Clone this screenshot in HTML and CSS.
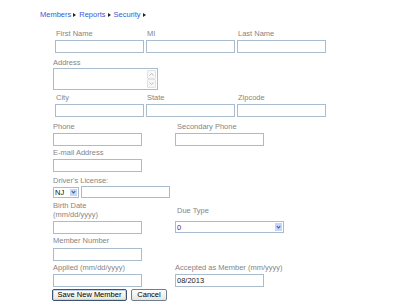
FILE: index.html
```html
<!DOCTYPE html>
<html lang="en">
<head>
    <meta charset="UTF-8" />
    <meta name="viewport" content="width=device-width, initial-scale=1" />
    <title>New Member</title>
    <link rel="stylesheet" href="styles.css">
</head>
<body>
    <div class="crumbs">
        <a href="#">Members</a><span class="sep"></span><a href="#">Reports</a><span class="sep"></span><a href="#">Security</a><span class="sep"></span>
    </div>

    <form class="member-form" onsubmit="return false;">
        <!-- Name -->
        <div class="trio block-name">
            <label>First Name</label>
            <label>MI</label>
            <label>Last Name</label>
            <input type="text" />
            <input type="text" />
            <input type="text" />
        </div>

        <div class="field block-address">
            <label>Address</label>
            <div class="textbox">
                <textarea></textarea>
                <div class="scroll">
                    <span class="scroll-btn">
                        <svg width="7" height="7" viewBox="0 0 7 7"><path d="M1.5 4.5 L3.5 2.5 L5.5 4.5" fill="none" stroke="#b9b9b9" stroke-width="1"/></svg>
                    </span>
                    <span class="scroll-btn">
                        <svg width="7" height="7" viewBox="0 0 7 7"><path d="M1.5 2.5 L3.5 4.5 L5.5 2.5" fill="none" stroke="#b9b9b9" stroke-width="1"/></svg>
                    </span>
                </div>
            </div>
        </div>

        <div class="trio block-city">
            <label>City</label>
            <label>State</label>
            <label>Zipcode</label>
            <input type="text" />
            <input type="text" />
            <input type="text" />
        </div>

        <div class="pair block-phone">
            <label>Phone</label>
            <label class="right">Secondary Phone</label>
            <input type="text" />
            <input type="text" />
        </div>

        <div class="field block-email">
            <label>E-mail Address</label>
            <input type="text" />
        </div>

        <div class="field block-license">
            <label>Driver's License:</label>
            <div class="license-row">
                <div class="select select-state">
                    <select><option>NJ</option></select>
                    <span class="arrow">
                        <svg width="8" height="8" viewBox="0 0 8 8"><path d="M2 3 L4 5 L6 3" fill="none" stroke="#4a5f8c" stroke-width="1.3"/></svg>
                    </span>
                </div>
                <input type="text" />
            </div>
        </div>

        <div class="pair block-birth">
            <label>Birth Date<br>(mm/dd/yyyy)</label>
            <label class="right">Due Type</label>
            <input type="text" />
            <div class="select select-due">
                <select><option>0</option></select>
                <span class="arrow">
                    <svg width="8" height="8" viewBox="0 0 8 8"><path d="M2 3 L4 5 L6 3" fill="none" stroke="#4a5f8c" stroke-width="1.3"/></svg>
                </span>
            </div>
        </div>

        <div class="field block-member">
            <label>Member Number</label>
            <input type="text" />
        </div>

        <div class="pair block-applied">
            <label>Applied (mm/dd/yyyy)</label>
            <label>Accepted as Member (mm/yyyy)</label>
            <input type="text" />
            <input type="text" value="08/2013" />
        </div>

        <div class="buttons">
            <button type="submit" class="btn btn-default">Save New Member</button>
            <button type="button" class="btn btn-cancel">Cancel</button>
        </div>
    </form>
</body>
</html>
```

FILE: styles.css
```css
/* Reset */
* {
    margin: 0;
    padding: 0;
    box-sizing: border-box;
}

body {
    font-family: 'Liberation Sans', Arial, sans-serif;
    font-size: 7.5px;
    line-height: 9px;
    color: #858585;
    background: #fff;
}

/* Breadcrumb */
.crumbs {
    padding: 10px 0 0 40px;
    line-height: 9px;
}

.crumbs a {
    color: #3a5ad6;
    text-decoration: none;
}

.crumbs .sep {
    display: inline-block;
    width: 0;
    height: 0;
    border-left: 3px solid #222;
    border-top: 2.5px solid transparent;
    border-bottom: 2.5px solid transparent;
    margin: 0 3px 0 2px;
    vertical-align: 0;
}

/* Form */
.member-form {
    padding-left: 53px;
}

.member-form label {
    display: block;
    line-height: 9px;
}

input[type="text"],
textarea,
select {
    font-family: inherit;
    font-size: 7.5px;
    color: #222;
}

input[type="text"] {
    display: block;
    width: 89px;
    height: 13px;
    border: 1px solid #a9bccd;
    padding: 0 1px;
    outline: none;
}

.field label {
    margin-bottom: 2px;
}

/* three columns (name, city) */
.trio {
    display: grid;
    grid-template-columns: repeat(3, 89px);
    column-gap: 2px;
    row-gap: 2px;
    margin-left: 2px;
}

.trio label {
    padding-left: 1px;
}

/* two columns */
.pair {
    display: grid;
    grid-template-columns: 122px auto;
    row-gap: 2px;
}

.pair label {
    align-self: center;
}

.pair label.right {
    padding-left: 2px;
}

/* vertical rhythm */
.block-name { margin-top: 10px; }
.block-address { margin-top: 5px; }
.block-address label { margin-bottom: 1px; }
.block-city { margin-top: 3px; }
.block-phone { margin-top: 5px; }
.block-email { margin-top: 2px; }
.block-license { margin-top: 4px; }
.block-license label { margin-bottom: 1px; }
.block-birth { margin-top: 3px; }
.block-member { margin-top: 2px; }
.block-member label { margin-bottom: 3px; }
.block-applied { margin-top: 2px; }

/* textarea with scrollbar */
.textbox {
    display: flex;
    width: 105px;
    height: 22px;
    border: 1px solid #a9bccd;
}

.textbox textarea {
    flex: 1;
    border: none;
    resize: none;
    outline: none;
    overflow: hidden;
}

.scroll {
    width: 9px;
    display: flex;
    flex-direction: column;
    justify-content: space-between;
    padding: 1px 0;
    margin-right: 1px;
}

.scroll-btn {
    display: flex;
    align-items: center;
    justify-content: center;
    height: 9px;
    background: #f7f7f7;
    border: 1px solid #e2e2e2;
    border-radius: 1px;
}

/* drop downs */
.select {
    display: flex;
    border: 1px solid #a9bccd;
    background: #fff;
}

.select select {
    flex: 1;
    min-width: 0;
    appearance: none;
    -webkit-appearance: none;
    border: none;
    background: transparent;
    padding-left: 1px;
    outline: none;
    line-height: 9px;
}

.select .arrow {
    width: 9px;
    display: flex;
    align-items: center;
    justify-content: center;
    background: #c6d6fb;
    border: 1px solid #fff;
}

.select-state {
    width: 26px;
    height: 11px;
}

.select-state select {
    color: #111;
}

.select-due {
    width: 109px;
    height: 12px;
}

.select-due select {
    color: #6a1b3a;
}

.license-row {
    display: flex;
    align-items: center;
    gap: 2px;
    height: 12px;
}

.license-row input[type="text"] {
    height: 12px;
}

/* buttons */
.buttons {
    display: flex;
    gap: 4px;
    margin-top: 2px;
    margin-left: -1px;
}

.btn {
    height: 12px;
    font-family: inherit;
    font-size: 7.5px;
    line-height: 10px;
    color: #000;
    background: linear-gradient(#fefefe, #e6e6e0);
    border: 1px solid #6f7f90;
    border-radius: 2px;
    cursor: pointer;
}

.btn-default {
    width: 75px;
    border-color: #3d5373;
    box-shadow: inset 0 0 0 1px #c3d4ee;
}

.btn-cancel {
    width: 36px;
}
```
